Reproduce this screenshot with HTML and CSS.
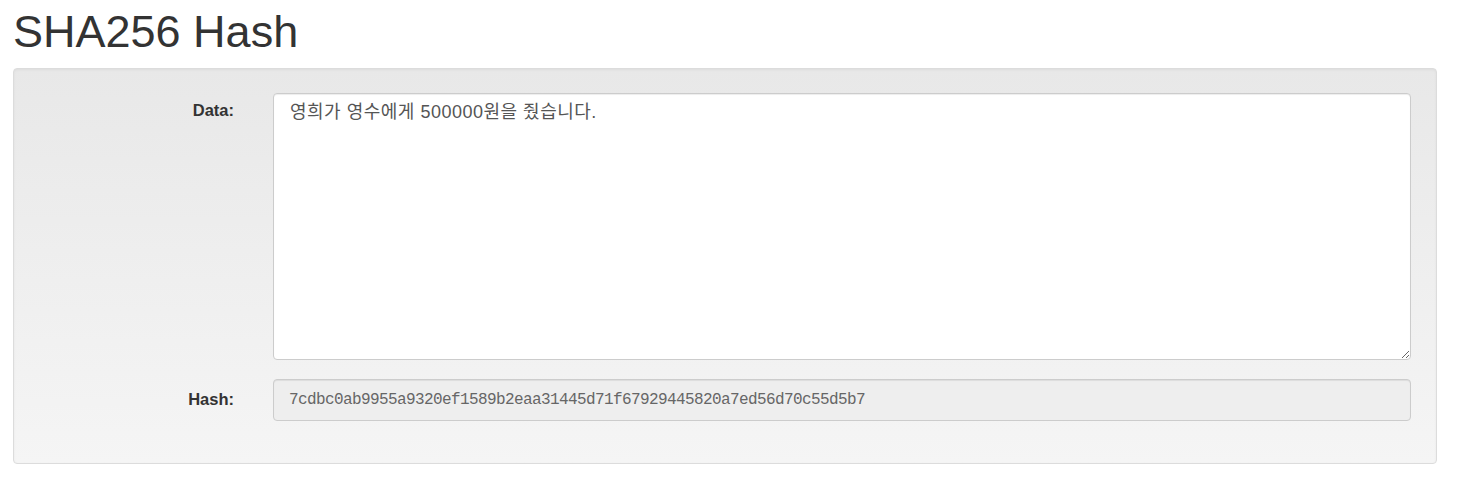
FILE: index.html
```html
<!DOCTYPE html>
<html lang="ko">
<head>
<meta charset="utf-8">
<title>SHA256 Hash</title>
<link rel="stylesheet" href="styles.css">
</head>
<body>
<div class="page">
  <h1 class="title">SHA256 Hash</h1>
  <form class="well">
    <label class="label label-data" for="data">Data:</label>
    <textarea id="data" class="field field-area">영희가 영수에게 500000원을 줬습니다.</textarea>
    <label class="label label-hash" for="hash">Hash:</label>
    <input id="hash" class="field field-hash" type="text" disabled value="7cdbc0ab9955a9320ef1589b2eaa31445d71f67929445820a7ed56d70c55d5b7">
  </form>
</div>
</body>
</html>
```

FILE: styles.css
```css
html, body {
  margin: 0;
  padding: 0;
  background: #fff;
}

body {
  font-family: "Liberation Sans", Arial, "Noto Sans CJK KR", sans-serif;
  color: #333;
}

.page {
  padding: 0 26px 0 13px;
}

.title {
  margin: 0;
  padding-top: 7px;
  font-size: 45px;
  font-weight: 400;
  line-height: 1.1;
  color: #333;
}

.well {
  margin-top: 11px;
  display: grid;
  grid-template-columns: 195px 1fr;
  column-gap: 39px;
  row-gap: 19px;
  padding: 24px 25px 42px 25px;
  border: 1px solid #dcdcdc;
  border-radius: 4px;
  background: linear-gradient(to bottom, #e8e8e8 0%, #f5f5f5 100%);
  box-shadow: inset 0 1px 3px rgba(0,0,0,.05), 0 1px 0 rgba(255,255,255,.1);
}

.label {
  text-align: right;
  font-weight: 700;
  font-size: 16.5px;
  line-height: 20px;
  color: #333;
}

.label-data {
  padding-top: 7px;
}

.label-hash {
  padding-top: 10px;
}

.field {
  box-sizing: border-box;
  width: 100%;
  margin: 0;
  border: 1px solid #ccc;
  border-radius: 4px;
  box-shadow: inset 0 1px 1px rgba(0,0,0,.075);
  color: #555;
}

.field-area {
  height: 267px;
  padding: 6px 16px;
  font-family: "Liberation Sans", Arial, "Noto Sans CJK KR", sans-serif;
  font-size: 18px;
  letter-spacing: 0.5px;
  line-height: 1.4;
  background: #fff;
  resize: vertical;
}

.field-hash {
  height: 42px;
  padding: 0 15px;
  font-family: "Liberation Mono", "Courier New", monospace;
  font-size: 16px;
  letter-spacing: -0.6px;
  background: #eee;
  -webkit-text-fill-color: #666;
  opacity: 1;
}
```
